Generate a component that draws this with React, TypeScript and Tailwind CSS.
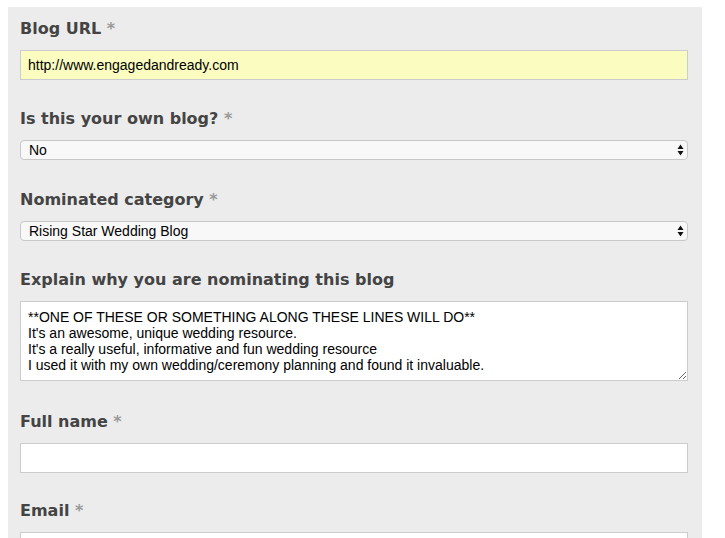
import React from "react";

const label = "block text-[16px] leading-[20px] font-bold text-[#444] mb-[11px] [font-family:'DejaVu_Sans',Verdana,sans-serif]";
const control = "block w-full border border-[#cccccc] text-[14px] text-black [font-family:'Liberation_Sans',Arial,sans-serif] outline-none";

function Req() {
  return <span className="text-[#999] font-bold"> *</span>;
}

function SelectBox({ value }: { value: string }) {
  return (
    <div className="relative">
      <select
        defaultValue={value}
        className="block w-full h-[20px] appearance-none rounded-[4px] border border-[#c8c8c8] bg-[#f8f8f8] pl-[8px] text-[14px] leading-[18px] text-black [font-family:'Liberation_Sans',Arial,sans-serif] outline-none"
      >
        <option>{value}</option>
      </select>
      <svg className="pointer-events-none absolute right-[4px] top-[4px]" width="7" height="12" viewBox="0 0 7 12">
        <path d="M3.5 0.5 L6.5 5 L0.5 5 Z" fill="#111" />
        <path d="M3.5 11.5 L6.5 7 L0.5 7 Z" fill="#111" />
      </svg>
    </div>
  );
}

export default function App() {
  return (
    <div className="min-h-[538px] bg-white pt-[7px] pl-[8px] pr-[23px]">
      <div className="bg-[#ececec] pt-[12px] pl-[12px] pr-[14px] pb-[20px]">
        <label className={label}>
          Blog URL<Req />
        </label>
        <input
          className={`${control} h-[30px] bg-[#fafcc0] px-[7px]`}
          defaultValue="http://www.engagedandready.com"
        />

        <div className="h-[29px]" />
        <label className={label}>
          Is this your own blog?<Req />
        </label>
        <SelectBox value="No" />

        <div className="h-[30px]" />
        <label className={label}>
          Nominated category<Req />
        </label>
        <SelectBox value="Rising Star Wedding Blog" />

        <div className="h-[29px]" />
        <label className={label}>Explain why you are nominating this blog</label>
        <textarea
          className={`${control} h-[80px] bg-white px-[7px] py-[7px] leading-[16px] resize-y`}
          defaultValue={
            "**ONE OF THESE OR SOMETHING ALONG THESE LINES WILL DO**\nIt's an awesome, unique wedding resource.\nIt's a really useful, informative and fun wedding resource\nI used it with my own wedding/ceremony planning and found it invaluable."
          }
        />

        <div className="h-[31px]" />
        <label className={label}>
          Full name<Req />
        </label>
        <input className={`${control} h-[30px] bg-white px-[7px]`} />

        <div className="h-[28px]" />
        <label className={label}>
          Email<Req />
        </label>
        <input className={`${control} h-[30px] bg-white px-[7px]`} />
      </div>
    </div>
  );
}
